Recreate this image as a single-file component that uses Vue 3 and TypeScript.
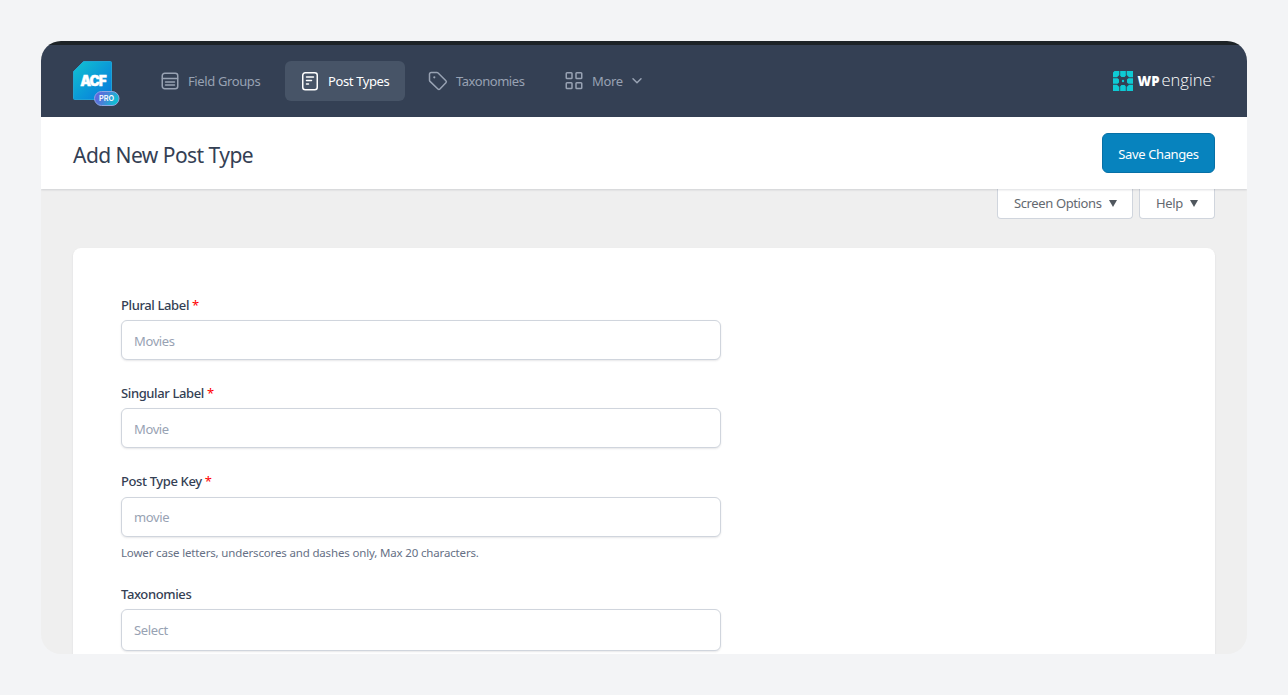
<script setup lang="ts">
interface Field {
  id: string
  label: string
  placeholder: string
  required: boolean
  hint?: string
}

const fields: Field[] = [
  { id: 'plural', label: 'Plural Label', placeholder: 'Movies', required: true },
  { id: 'singular', label: 'Singular Label', placeholder: 'Movie', required: true },
  {
    id: 'key',
    label: 'Post Type Key',
    placeholder: 'movie',
    required: true,
    hint: 'Lower case letters, underscores and dashes only, Max 20 characters.',
  },
  { id: 'taxonomies', label: 'Taxonomies', placeholder: 'Select', required: false },
]
</script>

<template>
  <div class="page">
    <div class="frame">
      <div class="admin-strip"></div>
      <header class="toolbar">
        <svg class="brand" width="48" height="48" viewBox="0 0 48 48">
          <defs>
            <linearGradient id="tile" x1="0" y1="0" x2="1" y2="1">
              <stop offset="0" stop-color="#12c3d0" />
              <stop offset=".55" stop-color="#0a98d8" />
              <stop offset="1" stop-color="#0877dd" />
            </linearGradient>
            <linearGradient id="pill" x1="0" y1="0" x2="1" y2=".3">
              <stop offset="0" stop-color="#6a5be0" />
              <stop offset=".5" stop-color="#4a80d8" />
              <stop offset="1" stop-color="#10bfd3" />
            </linearGradient>
          </defs>
          <path d="M10.500 4.500H37.500q1 0 1 1V41.500q0 1-1 1H1.500q-1 0-1-1V14.500z" fill="url(#tile)" stroke="#22aee2" stroke-width=".8" />
          <text class="brand-name" x="7.200" y="28.800" textLength="25.500" lengthAdjust="spacingAndGlyphs">ACF</text>
          <rect x="21.500" y="34.500" width="24.500" height="14" rx="7" fill="url(#pill)" stroke="#8da7e2" />
          <text class="brand-tier" x="26" y="44.200" textLength="15" lengthAdjust="spacingAndGlyphs">PRO</text>
        </svg>

        <nav class="tabs">
          <a class="tab groups">
            <svg width="20" height="20" viewBox="0 0 20 20" class="icon">
              <rect x="2.250" y="2.250" width="15.500" height="15.500" rx="2.500" />
              <path d="M2.500 7.500h15M5.500 11h9M5.500 14h9" />
            </svg>
            <span>Field Groups</span>
          </a>
          <a class="tab types active">
            <svg width="20" height="20" viewBox="0 0 20 20" class="icon">
              <rect x="2.750" y="1.750" width="14.500" height="17" rx="2.500" />
              <path d="M6.500 6h7M6.500 9.500h5M6.500 13h2" />
            </svg>
            <span>Post Types</span>
          </a>
          <a class="tab taxes">
            <svg width="20" height="20" viewBox="0 0 20 20" class="icon">
              <path d="M1.500 3.200q0-1.700 1.700-1.700h5.700q.7 0 1.200.5l7.800 7.800q1 1 0 2l-6 6.200q-1 1-2 0L2 10.400q-.5-.5-.5-1.200z" />
              <circle cx="6.300" cy="6.300" r="1.100" fill="currentColor" stroke="none" />
            </svg>
            <span>Taxonomies</span>
          </a>
          <a class="tab more">
            <svg width="20" height="20" viewBox="0 0 20 20" class="icon">
              <rect x="2.250" y="1.750" width="5.750" height="5.750" rx=".8" />
              <rect x="12" y="1.750" width="5.750" height="5.750" rx=".8" />
              <rect x="2.250" y="11.750" width="5.750" height="5.750" rx=".8" />
              <rect x="12" y="11.750" width="5.750" height="5.750" rx=".8" />
            </svg>
            <span>More</span>
            <svg width="12" height="8" viewBox="0 0 12 8" class="icon chevron"><path d="M2 1.700 6 5.700l4-4" /></svg>
          </a>
        </nav>

        <svg class="wpe" width="102" height="24" viewBox="0 0 102 24">
          <g fill="#0ecad4">
            <path d="M1.500 2h4.800v4L5 7.200 4 8.300H0V3.500z" />
            <path d="M7.200 2h5.600v4.600L11.600 8H8.400L7.200 6.600z" />
            <path d="M13.700 2H20v6.300h-4L13.700 6z" />
            <path d="M0 9.200h4.600L6 10.400v3.200l-1.400 1.200H0z" />
            <path d="M20 9.200h-4.600L14 10.400v3.200l1.400 1.200H20z" />
            <path d="M0 15.700h4L6.300 18v4H0z" />
            <path d="M7.200 22v-4.600L8.400 16h3.200l1.200 1.400V22z" />
            <path d="M20 15.700h-4L13.700 18v4H20z" />
            <circle cx="10" cy="12" r="1.200" />
          </g>
          <text class="wpe-wp" x="24.500" y="17" textLength="22" lengthAdjust="spacingAndGlyphs">WP</text>
          <text class="wpe-engine" x="48.500" y="17" textLength="50" lengthAdjust="spacingAndGlyphs">engine</text>
          <text class="wpe-tm" x="98.500" y="9.500">™</text>
        </svg>
      </header>

      <div class="heading">
        <h1>Add New Post Type</h1>
        <button type="button" class="save"><span>Save Changes</span></button>
      </div>

      <div class="meta">
        <button type="button" class="drop options"><span>Screen Options</span><i class="caret"></i></button>
        <button type="button" class="drop help"><span>Help</span><i class="caret"></i></button>
      </div>

      <main class="card">
        <div v-for="f in fields" :key="f.id" class="field" :class="f.id">
          <label :for="f.id"><span>{{ f.label }}</span> <b v-if="f.required">*</b></label>
          <input :id="f.id" type="text" :placeholder="f.placeholder" />
          <p v-if="f.hint"><span>{{ f.hint }}</span></p>
        </div>
      </main>
    </div>
  </div>
</template>

<style>
body {
  background: #f3f4f6;
}
</style>

<style scoped>
.page {
  box-sizing: border-box;
  width: 1288px;
  height: 695px;
  padding: 41px;
  background: #f3f4f6;
  font-family: 'Noto Sans', 'Open Sans', sans-serif;
  font-size: 13px;
  letter-spacing: -0.38px;
}
.frame {
  display: flex;
  flex-direction: column;
  height: 613px;
  overflow: hidden;
  border-radius: 20px;
  background: #efefef;
}
.admin-strip {
  flex: none;
  height: 4px;
  background: #1d2327;
}
.toolbar {
  flex: none;
  display: flex;
  align-items: center;
  height: 72px;
  padding: 0 32px;
  box-sizing: border-box;
  background: #344054;
}
.brand {
  display: block;
  overflow: visible;
  letter-spacing: 0;
}
.brand-name {
  font: 900 14px Inter, 'Open Sans', sans-serif;
  letter-spacing: -1px;
  fill: #fff;
  stroke: #fff;
  stroke-width: 0.4;
}
.brand-tier {
  font: 600 7.500px Inter, sans-serif;
  fill: #fff;
}
.tabs {
  display: flex;
  gap: 8px;
  margin-left: 23px;
}
.tab {
  box-sizing: border-box;
  display: flex;
  align-items: center;
  height: 40px;
  padding-left: 15px;
  border-radius: 6px;
  color: #98a2b3;
  white-space: nowrap;
}
.tab span {
  margin-left: 8px;
}
.groups {
  width: 133px;
  padding-left: 16px;
}
.types {
  width: 120px;
}
.taxes {
  width: 128px;
  letter-spacing: -0.45px;
}
.more {
  width: 100px;
}
.active {
  background: #475467;
  color: #fff;
}
.icon {
  flex: none;
  fill: none;
  stroke: currentColor;
  stroke-width: 1.500;
  stroke-linecap: round;
  stroke-linejoin: round;
}
.chevron {
  margin-left: 8px;
}
.wpe {
  margin-left: auto;
  overflow: visible;
  letter-spacing: 0;
}
.wpe-wp {
  font: 800 13.500px 'Open Sans', sans-serif;
  fill: #fff;
}
.wpe-engine {
  font: 300 16.500px 'Open Sans', sans-serif;
  fill: #fff;
}
.wpe-tm {
  font: 4px 'Open Sans', sans-serif;
  fill: #cbd2dc;
}
.heading {
  position: relative;
  flex: none;
  box-sizing: border-box;
  display: flex;
  align-items: center;
  justify-content: space-between;
  height: 72px;
  padding: 0 32px;
  background: #fff;
  box-shadow: 0 1px 2px rgba(16, 24, 40, 0.14);
}
h1 {
  margin: 0;
  padding-top: 3px;
  color: #344054;
  font-size: 21px;
  font-weight: 400;
  line-height: 28px;
  letter-spacing: -0.54px;
}
button {
  box-sizing: border-box;
  font: inherit;
  letter-spacing: inherit;
  white-space: nowrap;
}
.save {
  width: 113px;
  height: 40px;
  padding: 2px 0 0;
  border: 1px solid #0670a6;
  border-radius: 6px;
  background: #0783be;
  color: #fff;
}
.meta {
  flex: none;
  display: flex;
  justify-content: flex-end;
  gap: 6px;
  height: 59px;
  padding-right: 32px;
}
.drop {
  display: flex;
  align-items: center;
  height: 30px;
  padding: 0 0 2px 16px;
  border: 1px solid #d0d5dd;
  border-top: 0;
  border-radius: 0 0 4px 4px;
  background: #fff;
  color: #646970;
}
.options {
  width: 136px;
}
.help {
  width: 76px;
}
.caret {
  margin: 1px 0 0 7px;
  border: 4px solid transparent;
  border-top: 7px solid #50575e;
  border-bottom: 0;
}
.card {
  flex: 1;
  margin: 0 32px;
  padding: 47px 48px 0;
  border-radius: 8px 8px 0 0;
  background: #fff;
  box-shadow: 0 1px 2px rgba(16, 24, 40, 0.1);
}
.field {
  display: flex;
  flex-direction: column;
  width: 600px;
  height: 88px;
}
.key {
  height: 113px;
}
label {
  height: 25px;
  line-height: 20px;
  color: #344054;
  font-weight: 500;
  white-space: nowrap;
}
label b {
  color: #f00;
  font-weight: 400;
}
.key label {
  height: 26px;
}
input {
  box-sizing: border-box;
  width: 600px;
  height: 40px;
  padding: 2px 12px 0;
  border: 1px solid #d0d5dd;
  border-radius: 6px;
  outline: 0;
  background: #fff;
  box-shadow: 0 1px 2px rgba(16, 24, 40, 0.1);
  color: #344054;
  font: inherit;
  letter-spacing: inherit;
}
.key input {
  padding-top: 0;
}
.taxonomies input {
  height: 42px;
  padding-top: 0;
}
input::placeholder {
  color: #98a2b3;
  opacity: 1;
}
.field p {
  margin: 6px 0 0;
  color: #667085;
  font-size: 11.500px;
  line-height: 20px;
  letter-spacing: -0.16px;
  white-space: nowrap;
}
</style>
